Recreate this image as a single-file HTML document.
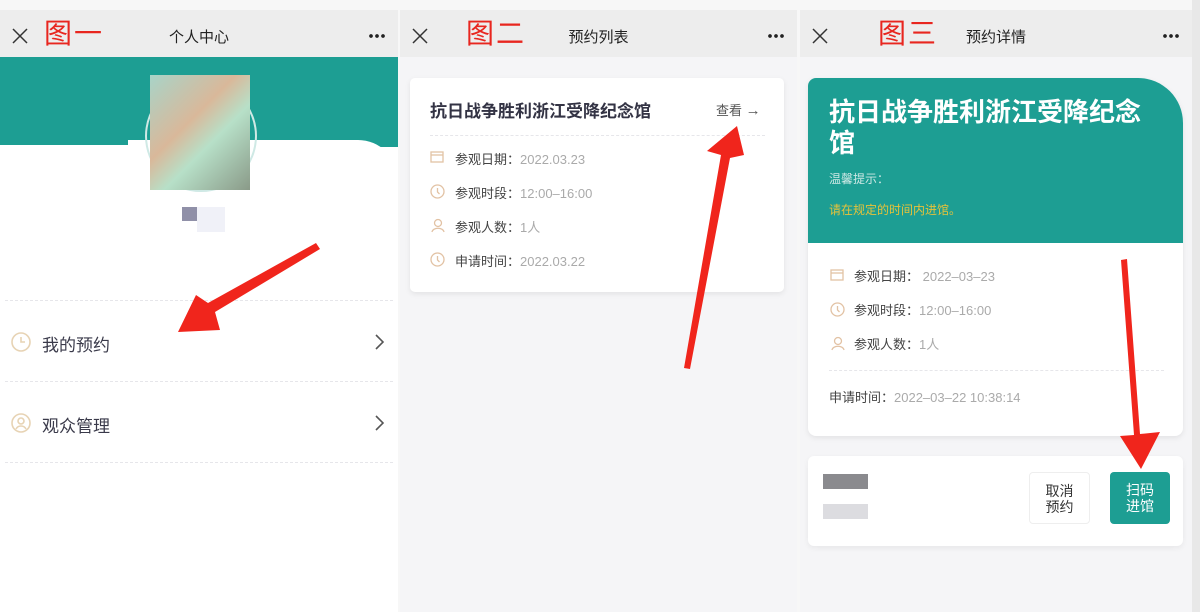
<!DOCTYPE html>
<html><head><meta charset="utf-8"><style>
*{margin:0;padding:0;box-sizing:border-box}
body{width:1200px;height:612px;overflow:hidden;background:#f7f7f7;font-family:"Liberation Sans","Noto Sans CJK SC",sans-serif;position:relative}
.abs{position:absolute}
.bar{position:absolute;top:10px;height:47px;background:#ededed;font-size:15px;color:#222}
.bar .t{position:absolute;top:16px;width:100%;text-align:center}
.bar .x{position:absolute;left:12px;top:18px}
.bar .d{position:absolute;right:12px;top:24px;width:18px;height:4px;background:radial-gradient(circle,#222 1.7px,transparent 2px) 0 0/6px 4px repeat-x}
.lab{position:absolute;top:12px;font-size:28px;color:#e8261f;letter-spacing:2px}
.dash{position:absolute;border-top:1px dashed #e6e6ea}
.g{color:#aaa}
.k{color:#444}
</style></head><body>
<!-- panel 1 -->
<div class="bar" style="left:0;width:398px"><svg class="x" width="16" height="16"><path d="M1 1l14 14M15 1L1 15" stroke="#333" stroke-width="1.5"/></svg><div class="t">个人中心</div><div class="d"></div></div>
<div class="abs" style="left:0;top:57px;width:398px;height:555px;background:#fff"></div>
<div class="abs" style="left:0;top:57px;width:398px;height:90px;background:#1d9e93"></div>
<div class="abs" style="left:128px;top:140px;width:270px;height:60px;background:#fff;border-top-right-radius:40px"></div>
<div class="abs" style="left:0;top:145px;width:130px;height:60px;background:#fff"></div>
<div class="abs" style="left:145px;top:80px;width:112px;height:112px;border-radius:50%;border:2px solid #cfe9e5"></div>
<div class="abs" style="left:150px;top:75px;width:100px;height:115px;background:linear-gradient(135deg,#a8d4c8,#d9b89a 40%,#b7e0c8 60%,#8a9a88)"></div>
<div class="abs" style="left:182px;top:207px;width:15px;height:14px;background:#9090a8"></div>
<div class="abs" style="left:197px;top:207px;width:28px;height:25px;background:#f0f1f8"></div>
<div class="dash" style="left:5px;top:300px;width:388px"></div>
<div class="dash" style="left:5px;top:381px;width:388px"></div>
<div class="dash" style="left:5px;top:462px;width:388px"></div>
<svg class="abs" style="left:10px;top:331px" width="22" height="22" viewBox="0 0 22 22" fill="none" stroke="#e7d3b4" stroke-width="1.6"><circle cx="11" cy="11" r="9"/><path d="M11 6v5h4"/></svg>
<div class="abs k" style="left:42px;top:331px;font-size:17px;color:#3a3a4a">我的预约</div>
<svg class="abs" style="left:374px;top:333px" width="12" height="18"><path d="M2 2l7 7-7 7" fill="none" stroke="#555" stroke-width="1.6"/></svg>
<svg class="abs" style="left:10px;top:412px" width="22" height="22" viewBox="0 0 22 22" fill="none" stroke="#e7d3b4" stroke-width="1.6"><circle cx="11" cy="11" r="9"/><circle cx="11" cy="9" r="3"/><path d="M6 17c2-4 8-4 10 0"/></svg>
<div class="abs" style="left:42px;top:412px;font-size:17px;color:#3a3a4a">观众管理</div>
<svg class="abs" style="left:374px;top:414px" width="12" height="18"><path d="M2 2l7 7-7 7" fill="none" stroke="#555" stroke-width="1.6"/></svg>
<div class="lab" style="left:44px">图一</div>

<!-- panel 2 -->
<div class="bar" style="left:400px;width:397px"><svg class="x" width="16" height="16"><path d="M1 1l14 14M15 1L1 15" stroke="#333" stroke-width="1.5"/></svg><div class="t">预约列表</div><div class="d"></div></div>
<div class="abs" style="left:400px;top:57px;width:397px;height:555px;background:#f5f5f7"></div>
<div class="abs" style="left:410px;top:78px;width:374px;height:214px;background:#fff;border-radius:5px;box-shadow:0 2px 6px rgba(0,0,0,.08)"></div>
<div class="abs" style="left:430px;top:97px;font-size:17px;font-weight:bold;color:#333344">抗日战争胜利浙江受降纪念馆</div>
<div class="abs" style="left:716px;top:100px;font-size:13px;color:#555">查看 <span style="font-size:15px">→</span></div>
<div class="dash" style="left:430px;top:135px;width:335px"></div>
<svg class="abs" style="left:430px;top:150px" width="14" height="14" fill="none" stroke="#e2c2a4" stroke-width="1.3"><rect x="1" y="2" width="12" height="10"/><path d="M1 5h12"/></svg>
<div class="abs" style="left:455px;top:149px;font-size:13px"><span class="k">参观日期：</span><span class="g">2022.03.23</span></div>
<svg class="abs" style="left:430px;top:184px" width="15" height="15" fill="none" stroke="#e2c2a4" stroke-width="1.3"><circle cx="7.5" cy="7.5" r="6.5"/><path d="M7.5 4v4l2 2"/></svg>
<div class="abs" style="left:455px;top:183px;font-size:13px"><span class="k">参观时段：</span><span class="g">12:00–16:00</span></div>
<svg class="abs" style="left:431px;top:218px" width="14" height="15" fill="none" stroke="#e2c2a4" stroke-width="1.3"><circle cx="7" cy="5" r="3.5"/><path d="M1 14c1-5 11-5 12 0"/></svg>
<div class="abs" style="left:455px;top:217px;font-size:13px"><span class="k">参观人数：</span><span class="g">1人</span></div>
<svg class="abs" style="left:430px;top:252px" width="15" height="15" fill="none" stroke="#e2c2a4" stroke-width="1.3"><circle cx="7.5" cy="7.5" r="6.5"/><path d="M7.5 4v4l2 2"/></svg>
<div class="abs" style="left:455px;top:251px;font-size:13px"><span class="k">申请时间：</span><span class="g">2022.03.22</span></div>
<div class="lab" style="left:466px">图二</div>

<!-- panel 3 -->
<div class="bar" style="left:800px;width:392px"><svg class="x" width="16" height="16"><path d="M1 1l14 14M15 1L1 15" stroke="#333" stroke-width="1.5"/></svg><div class="t">预约详情</div><div class="d"></div></div>
<div class="abs" style="left:800px;top:57px;width:392px;height:555px;background:#f5f5f7"></div>
<div class="abs" style="left:1192px;top:0;width:8px;height:612px;background:#e8e8e8"></div>
<div class="abs" style="left:808px;top:78px;width:375px;height:358px;background:#fff;border-radius:8px 45px 8px 8px;box-shadow:0 2px 6px rgba(0,0,0,.08);overflow:hidden"><div style="height:165px;background:#1d9e93"></div></div>
<div class="abs" style="left:829px;top:97px;width:330px;font-size:26px;line-height:31px;font-weight:bold;color:#fff">抗日战争胜利浙江受降纪念馆</div>
<div class="abs" style="left:829px;top:170px;font-size:12px;color:#cde8e4">温馨提示：</div>
<div class="abs" style="left:829px;top:201px;font-size:12px;color:#e6c23a">请在规定的时间内进馆。</div>
<svg class="abs" style="left:830px;top:268px" width="14" height="14" fill="none" stroke="#e2c2a4" stroke-width="1.3"><rect x="1" y="2" width="12" height="10"/><path d="M1 5h12"/></svg>
<div class="abs" style="left:854px;top:266px;font-size:13px"><span class="k">参观日期：</span><span class="g">&nbsp;2022–03–23</span></div>
<svg class="abs" style="left:830px;top:302px" width="15" height="15" fill="none" stroke="#e2c2a4" stroke-width="1.3"><circle cx="7.5" cy="7.5" r="6.5"/><path d="M7.5 4v4l2 2"/></svg>
<div class="abs" style="left:854px;top:300px;font-size:13px"><span class="k">参观时段：</span><span class="g">12:00–16:00</span></div>
<svg class="abs" style="left:831px;top:336px" width="14" height="15" fill="none" stroke="#e2c2a4" stroke-width="1.3"><circle cx="7" cy="5" r="3.5"/><path d="M1 14c1-5 11-5 12 0"/></svg>
<div class="abs" style="left:854px;top:334px;font-size:13px"><span class="k">参观人数：</span><span class="g">1人</span></div>
<div class="dash" style="left:829px;top:370px;width:335px"></div>
<div class="abs" style="left:829px;top:387px;font-size:13px"><span class="k">申请时间：</span><span class="g">2022–03–22 10:38:14</span></div>
<div class="abs" style="left:808px;top:456px;width:375px;height:90px;background:#fff;border-radius:6px;box-shadow:0 2px 6px rgba(0,0,0,.06)"></div>
<div class="abs" style="left:823px;top:474px;width:45px;height:15px;background:#8a8a8e"></div>
<div class="abs" style="left:823px;top:504px;width:45px;height:15px;background:#dcdce0"></div>
<div class="abs" style="left:1029px;top:472px;width:61px;height:52px;border:1px solid #eee;border-radius:4px;background:#fff;font-size:14px;line-height:16px;color:#333;text-align:center;padding-top:10px">取消<br>预约</div>
<div class="abs" style="left:1110px;top:472px;width:60px;height:52px;border-radius:4px;background:#1d9e93;font-size:14px;line-height:16px;color:#fff;text-align:center;padding-top:10px">扫码<br>进馆</div>
<div class="lab" style="left:878px">图三</div>

<!-- arrows -->
<svg class="abs" style="left:0;top:0" width="1200" height="612">
<g fill="#f0251c">
<polygon points="316,243 320,249 215,312 220,330 178,332 196,295 208,303"/>
<polygon points="684,368 690,369 730,158 744,155 737,126 707,151 721,155"/>
<polygon points="1121,260 1127,259 1140,434 1160,432 1141,469 1120,436 1134,435"/>
</g></svg>
</body></html>
